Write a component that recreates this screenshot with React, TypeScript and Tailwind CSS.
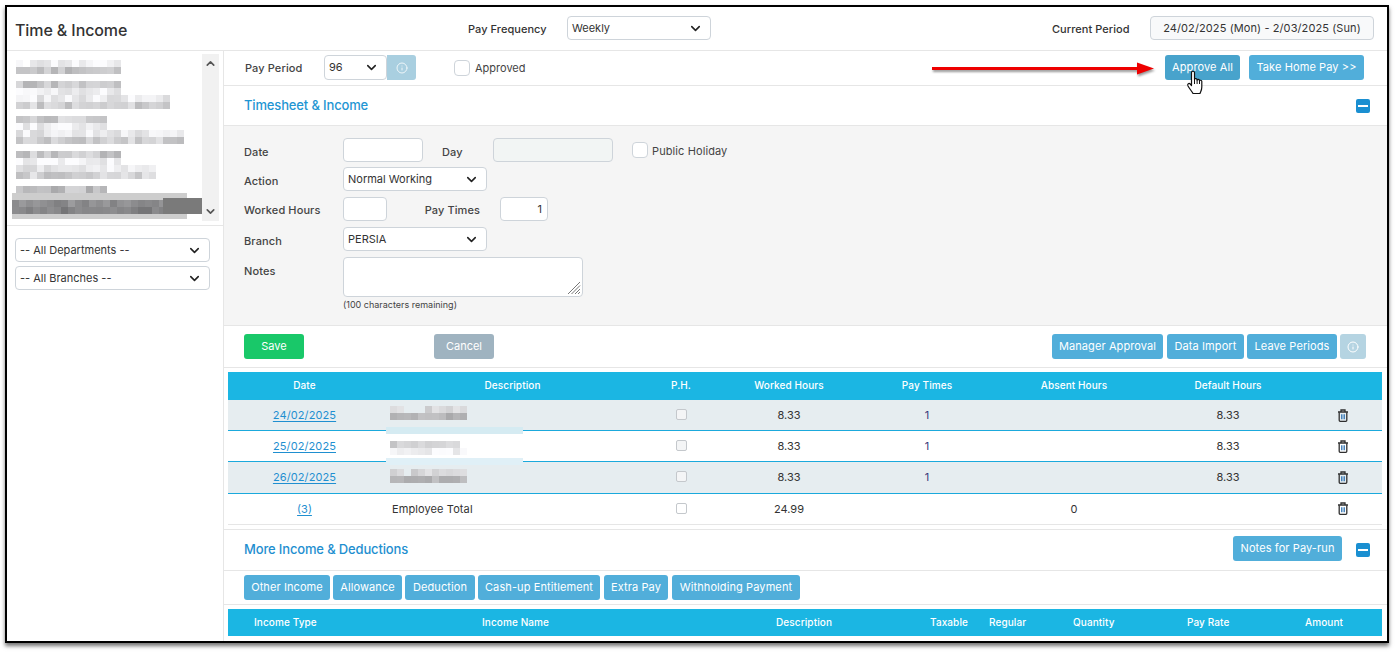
import { ChevronDown, ChevronUp, Info } from "lucide-react";

const inputClass =
  "border border-[#ced4da] rounded-[4px] outline-none text-[11px] text-[#333]";

type MosaicRow = { y: number; w: number; base: number; skip?: number[] };

// pixelated block standing in for the blurred names
function Mosaic({
  rows,
  seed,
  width,
  height,
  spread = 26,
}: {
  rows: MosaicRow[];
  seed: number;
  width: number;
  height: number;
  spread?: number;
}) {
  let s = seed;
  const next = () => {
    s = (s * 9301 + 49297) % 233280;
    return s / 233280;
  };
  const cells: { x: number; y: number; fill: string }[] = [];
  rows.forEach((r) => {
    for (let x = 0; x < r.w; x += 7) {
      const v = Math.min(252, Math.round(r.base + (next() - 0.5) * spread));
      if (r.skip && r.skip.includes(x / 7)) continue;
      cells.push({ x, y: r.y, fill: `rgb(${v},${v},${Math.min(255, v + 2)})` });
    }
  });
  return (
    <svg width={width} height={height} className="block">
      {cells.map((c, i) => (
        <rect key={i} x={c.x} y={c.y} width={7} height={7} fill={c.fill} />
      ))}
    </svg>
  );
}

const listRows: MosaicRow[] = [
  { y: 0, w: 105, base: 240, skip: [1] },
  { y: 7, w: 105, base: 198 },
  { y: 21, w: 105, base: 200 },
  { y: 28, w: 105, base: 236 },
  { y: 35, w: 154, base: 236 },
  { y: 42, w: 154, base: 206 },
  { y: 56, w: 91, base: 205 },
  { y: 63, w: 91, base: 242 },
  { y: 70, w: 168, base: 232 },
  { y: 77, w: 168, base: 208 },
  { y: 91, w: 105, base: 200 },
  { y: 98, w: 105, base: 242 },
  { y: 105, w: 140, base: 232 },
  { y: 112, w: 140, base: 210 },
  { y: 126, w: 91, base: 190 },
];

function Select({ label, className }: { label: string; className: string }) {
  return (
    <button
      className={`${inputClass} bg-white flex items-center justify-between pl-[4px] pr-[7px] ${className}`}
    >
      <span>{label}</span>
      <ChevronDown size={15} strokeWidth={2.5} className="text-[#222]" />
    </button>
  );
}

function Btn({ children, className = "" }: { children: React.ReactNode; className?: string }) {
  return (
    <button
      className={`h-[25px] rounded-[3px] bg-[#51aeda] text-white text-[11px] tracking-[0.1px] flex items-center justify-center ${className}`}
    >
      {children}
    </button>
  );
}

function Minus() {
  return (
    <span className="w-[14px] h-[14px] rounded-[2px] bg-[#1a8fd1] flex items-center justify-center">
      <span className="w-[10px] h-[2px] bg-white" />
    </span>
  );
}

function Trash() {
  return (
    <svg width="12" height="13" viewBox="0 0 12 13" fill="none" className="block ml-[1px]">
      <path d="M1 3h10M4 3V1h4V3" stroke="#2f2f2f" strokeWidth="1.3" />
      <path d="M2.2 3.2v8.1a1 1 0 0 0 1 1h5.6a1 1 0 0 0 1-1V3.2" stroke="#2f2f2f" strokeWidth="1.3" />
      <path d="M4.8 5.2v5M7.2 5.2v5" stroke="#2a6fb0" strokeWidth="1.3" />
    </svg>
  );
}

const label = "text-[11px] font-medium text-[#444] tracking-[0.1px]";
const tableCols = "grid grid-cols-[153px_263px_74px_142px_134px_160px_148px_80px]";

const days: {
  date: string;
  band: boolean;
  h: string;
  pt: string;
  strip: string;
  mos: MosaicRow[];
}[] = [
  {
    date: "24/02/2025",
    band: true,
    h: "h-[31px]",
    pt: "pt-[6px]",
    strip: "bg-[#d5ebf2]",
    mos: [
      { y: 0, w: 77, base: 214, skip: [2, 3, 4] },
      { y: 7, w: 77, base: 182 },
    ],
  },
  {
    date: "25/02/2025",
    band: false,
    h: "h-[31px]",
    pt: "pt-[10px]",
    strip: "bg-[#e0f0f7]",
    mos: [
      { y: 0, w: 70, base: 208 },
      { y: 7, w: 77, base: 240 },
    ],
  },
  {
    date: "26/02/2025",
    band: true,
    h: "h-[32px]",
    pt: "pt-[7px]",
    strip: "",
    mos: [
      { y: 0, w: 77, base: 214, skip: [2] },
      { y: 7, w: 77, base: 182 },
    ],
  },
];

export default function App() {
  return (
    <div className="w-[1398px] h-[652px] bg-white pl-[5px] pt-[5px] overflow-hidden font-['Inter',sans-serif] text-[#333]">
      <div className="relative w-[1384px] h-[638px] border-2 border-black bg-white shadow-[0_3px_4px_rgba(0,0,0,0.55)] flex flex-col overflow-hidden">
        {/* header */}
        <div className="h-[44px] shrink-0 border-b border-[#e6e6e6] flex items-center pl-[8px]">
          <div className="w-[453px] text-[16px] font-medium text-[#333] tracking-[-0.1px] pt-[2px]">Time &amp; Income</div>
          <div className="w-[99px] text-[11px] font-medium text-[#333] tracking-[0.05px] pt-[2px]">Pay Frequency</div>
          <Select label="Weekly" className="w-[144px] h-[24px] -mt-[1px]" />
          <div className="ml-[341px] w-[98px] text-[11px] font-medium text-[#333] tracking-[0.05px] pt-[2px]">Current Period</div>
          <div className="w-[224px] h-[24px] -mt-[1px] rounded-[4px] border border-[#ced4da] bg-[#f8f9fa] text-[11px] tracking-[0.1px] text-[#333] flex items-center justify-center">
            24/02/2025 (Mon) - 2/03/2025 (Sun)
          </div>
        </div>

        <div className="flex flex-1 min-h-0">
          {/* left column */}
          <div className="w-[217px] shrink-0 border-r border-[#e6e6e6]">
            <div className="h-[175px] border-b border-[#e6e6e6] pt-[3px] flex">
              <div className="w-[195px] relative">
                <div className="pl-[9px] pt-[6px]">
                  <Mosaic rows={listRows} seed={11} width={186} height={133} spread={44} />
                </div>
                <div className="absolute left-[5px] top-[139px] w-[175px] h-[26px] bg-[#cdcdcd]" />
                <div className="absolute left-[5px] top-[146px]">
                  <Mosaic
                    rows={[
                      { y: 0, w: 154, base: 142 },
                      { y: 7, w: 154, base: 128 },
                    ]}
                    seed={5}
                    width={154}
                    height={14}
                    spread={30}
                  />
                </div>
                <div className="absolute left-[156px] top-[144px] w-[39px] h-[16px] bg-[#7a7a7a]" />
              </div>
              <div className="w-[17px] h-[167px] bg-[#f1f1f1] flex flex-col items-center justify-between py-[3px]">
                <ChevronUp size={13} strokeWidth={3} className="text-[#555]" />
                <ChevronDown size={13} strokeWidth={3} className="text-[#555]" />
              </div>
            </div>
            <div className="pl-[8px] pt-[12px] flex flex-col gap-[4px]">
              <Select label="-- All Departments --" className="w-[195px] h-[24px]" />
              <Select label="-- All Branches --" className="w-[195px] h-[24px]" />
            </div>
          </div>

          {/* right pane */}
          <div className="flex-1 min-w-0 flex flex-col">
            <div className="h-[35px] shrink-0 border-b border-[#e6e6e6] flex items-center pl-[21px] pr-[23px] pb-[1px]">
              <div className={`${label} w-[79px] text-[#333] pt-[1px]`}>Pay Period</div>
              <Select label="96" className="w-[63px] h-[25px]" />
              <div className="w-[29px] h-[25px] bg-[#a9cfe0] rounded-r-[3px] flex items-center justify-center">
                <Info size={12} className="text-white opacity-80" />
              </div>
              <input type="checkbox" className={`${inputClass} bg-white appearance-none w-[16px] h-[16px] ml-[38px] mt-[1px]`} />
              <span className="text-[11px] ml-[5px] text-[#444] pt-[1px]">Approved</span>
              <Btn className="w-[75px] ml-auto bg-[#48a3cc]!">Approve All</Btn>
              <Btn className="w-[115px] ml-[9px]">Take Home Pay &gt;&gt;</Btn>
            </div>

            <div className="h-[40px] shrink-0 border-b border-[#e6e6e6] flex items-center justify-between pl-[20px] pr-[17px]">
              <span className="text-[13px] font-medium tracking-[-0.15px] text-[#1f96d3]">Timesheet &amp; Income</span>
              <Minus />
            </div>

            {/* form */}
            <div className="h-[200px] shrink-0 bg-[#f5f5f5] border-b border-[#e6e6e6] pl-[20px] pt-[12px] flex flex-col">
              <div className="flex items-center h-[24px]">
                <div className={`${label} w-[99px] pt-[4px]`}>Date</div>
                <input className={`${inputClass} bg-white w-[80px] h-[24px]`} />
                <div className={`${label} w-[70px] pl-[19px] pt-[4px]`}>Day</div>
                <input className={`${inputClass} w-[120px] h-[24px] bg-[#f2f5f4]`} />
                <input type="checkbox" className={`${inputClass} bg-white appearance-none w-[16px] h-[16px] ml-[19px]`} />
                <span className="text-[11px] ml-[4px] text-[#444] tracking-[0.1px] pt-[2px]">Public Holiday</span>
              </div>
              <div className="flex items-center h-[24px] mt-[5px]">
                <div className={`${label} w-[99px] pt-[4px]`}>Action</div>
                <Select label="Normal Working" className="w-[144px] h-[24px]" />
              </div>
              <div className="flex items-center h-[24px] mt-[6px]">
                <div className={`${label} w-[99px] pt-[2px]`}>Worked Hours</div>
                <input className={`${inputClass} bg-white w-[44px] h-[24px]`} />
                <div className={`${label} w-[113px] text-right pr-[20px] pt-[2px]`}>Pay Times</div>
                <input
                  defaultValue="1"
                  className={`${inputClass} bg-white w-[48px] h-[24px] text-right pr-[5px]`}
                />
              </div>
              <div className="flex items-center h-[24px] mt-[6px]">
                <div className={`${label} w-[99px] pt-[4px]`}>Branch</div>
                <Select label="PERSIA" className="w-[144px] h-[24px]" />
              </div>
              <div className="flex mt-[6px]">
                <div className={`${label} w-[99px] pt-[6px]`}>Notes</div>
                <div>
                  <div className="relative w-[240px]">
                    <textarea className={`${inputClass} bg-white block w-[240px] h-[40px] resize-none`} />
                    <svg width="14" height="14" viewBox="0 0 14 14" className="absolute right-[2px] bottom-[2px] pointer-events-none">
                      <path d="M1 13 13 1M4.5 13 13 4.5M8 13l5-5M11 13l2-2" stroke="#777" strokeWidth="1" />
                    </svg>
                  </div>
                  <div className="text-[9px] text-[#444] mt-[1px]">(100 characters remaining)</div>
                </div>
              </div>
            </div>

            {/* actions */}
            <div className="h-[42px] shrink-0 border-b border-[#e6e6e6] flex items-center pl-[20px] pr-[21px]">
              <button className="w-[60px] h-[25px] rounded-[3px] bg-[#19c869] text-white text-[11px]">Save</button>
              <button className="w-[60px] h-[25px] rounded-[3px] bg-[#9fb3c0] text-white text-[11px] ml-[130px]">Cancel</button>
              <Btn className="w-[111px] ml-auto">Manager Approval</Btn>
              <Btn className="w-[77px] ml-[4px]">Data Import</Btn>
              <Btn className="w-[90px] ml-[3px]">Leave Periods</Btn>
              <div className="w-[26px] h-[25px] ml-[3px] rounded-[3px] bg-[#b5d4e2] flex items-center justify-center">
                <Info size={12} className="text-white" />
              </div>
            </div>

            {/* timesheet table */}
            <div className="mx-[4px] w-[1154px] mt-[4px]">
              <div className={`${tableCols} h-[28px] pb-[2px] items-center bg-[#1bb6e3] text-white text-[10px] font-medium text-center tracking-[0.1px]`}>
                <div>Date</div>
                <div>Description</div>
                <div>P.H.</div>
                <div>Worked Hours</div>
                <div>Pay Times</div>
                <div>Absent Hours</div>
                <div>Default Hours</div>
                <div />
              </div>
              {days.map((d) => (
                <div
                  key={d.date}
                  className={`${tableCols} ${d.h} items-center text-center text-[11px] border-b border-[#1ba9dc] ${d.band ? "bg-[#e6edf0]" : "bg-white"}`}
                >
                  <a className="text-[#1f8fd0] underline underline-offset-2 tracking-[0.1px]">{d.date}</a>
                  <div className={`relative h-full pl-[9px] ${d.pt}`}>
                    <Mosaic rows={d.mos} seed={d.date.charCodeAt(1) * 7} width={77} height={14} />
                    {d.strip && <div className={`absolute left-[5px] top-[27px] w-[137px] h-[7px] ${d.strip}`} />}
                  </div>
                  <div className="flex justify-center -mt-[2px]">
                    <span className="w-[11px] h-[11px] rounded-[2px] border border-[#c4c8cc] bg-[#f4f5f6]" />
                  </div>
                  <div>8.33</div>
                  <div className="text-[#3a3a7a]">1</div>
                  <div />
                  <div>8.33</div>
                  <div className="flex justify-center">
                    <Trash />
                  </div>
                </div>
              ))}
              <div className={`${tableCols} h-[31px] items-center text-center text-[11px] border-b border-[#e6e6e6]`}>
                <a className="text-[#1f8fd0] underline underline-offset-2">(3)</a>
                <div className="text-left pl-[11px] tracking-[0.1px]">Employee Total</div>
                <div className="flex justify-center -mt-[2px]">
                  <span className="w-[11px] h-[11px] rounded-[2px] border border-[#c4c8cc] bg-white" />
                </div>
                <div>24.99</div>
                <div />
                <div>0</div>
                <div />
                <div className="flex justify-center -mt-[1px]">
                  <Trash />
                </div>
              </div>
            </div>

            {/* more income */}
            <div className="h-[42px] mt-[4px] shrink-0 border-t border-b border-[#e6e6e6] flex items-center pl-[20px] pr-[17px]">
              <span className="text-[13px] font-medium tracking-[-0.15px] text-[#1f8fd0]">More Income &amp; Deductions</span>
              <Btn className="w-[109px] ml-auto -mt-[3px]">Notes for Pay-run</Btn>
              <span className="ml-[14px]">
                <Minus />
              </span>
            </div>
            <div className="h-[34px] shrink-0 border-b border-[#e6e6e6] flex items-center pl-[20px] gap-[3px]">
              <Btn className="w-[86px]">Other Income</Btn>
              <Btn className="w-[69px]">Allowance</Btn>
              <Btn className="w-[70px]">Deduction</Btn>
              <Btn className="w-[122px]">Cash-up Entitlement</Btn>
              <Btn className="w-[64px] ml-[1px]">Extra Pay</Btn>
              <Btn className="w-[128px] ml-[1px]">Withholding Payment</Btn>
            </div>
            <div className="mx-[4px] w-[1154px] mt-[4px] h-[27px] shrink-0 pl-[26px] bg-[#1bb6e3] text-white text-[10px] font-medium tracking-[0.1px] grid grid-cols-[228px_294px_154px_59px_84px_114px_118px_51px] items-center">
              <div>Income Type</div>
              <div>Income Name</div>
              <div>Description</div>
              <div>Taxable</div>
              <div>Regular</div>
              <div>Quantity</div>
              <div>Pay Rate</div>
              <div>Amount</div>
            </div>
          </div>
        </div>

        {/* annotation arrow and cursor over the page */}
        <svg
          width="226"
          height="16"
          viewBox="0 0 226 16"
          className="absolute left-[925px] top-[55px] drop-shadow-[1px_2px_1px_rgba(0,0,0,0.4)]"
        >
          <path d="M0 6.5h206" stroke="#ee0000" strokeWidth="3" />
          <path d="M205 .5l17 6-17 6z" fill="#ee0000" />
        </svg>
        <svg width="18" height="25" viewBox="0 0 17 25" className="absolute left-[1179px] top-[63px]">
          <path
            d="M5 12.5V2.5C5 .8 8 .8 8 2.5V9.5C8 8.3 10.6 8.3 10.6 9.8V10.3C10.6 9.1 13 9.1 13 10.6V11C13 9.9 15.3 10 15.3 11.3V17C15.3 20 14.5 21 13.5 23.5H6.5C5.5 21.5 3.5 19.5 1.5 16C.5 14 2.5 12.8 3.7 14L5 15.5Z"
            fill="white"
            stroke="#111"
            strokeWidth="1.2"
            strokeLinejoin="round"
          />
          <path d="M8 9.5V14M10.6 10.3V14M13 11V14" stroke="#111" strokeWidth="1" fill="none" />
        </svg>
      </div>
    </div>
  );
}
